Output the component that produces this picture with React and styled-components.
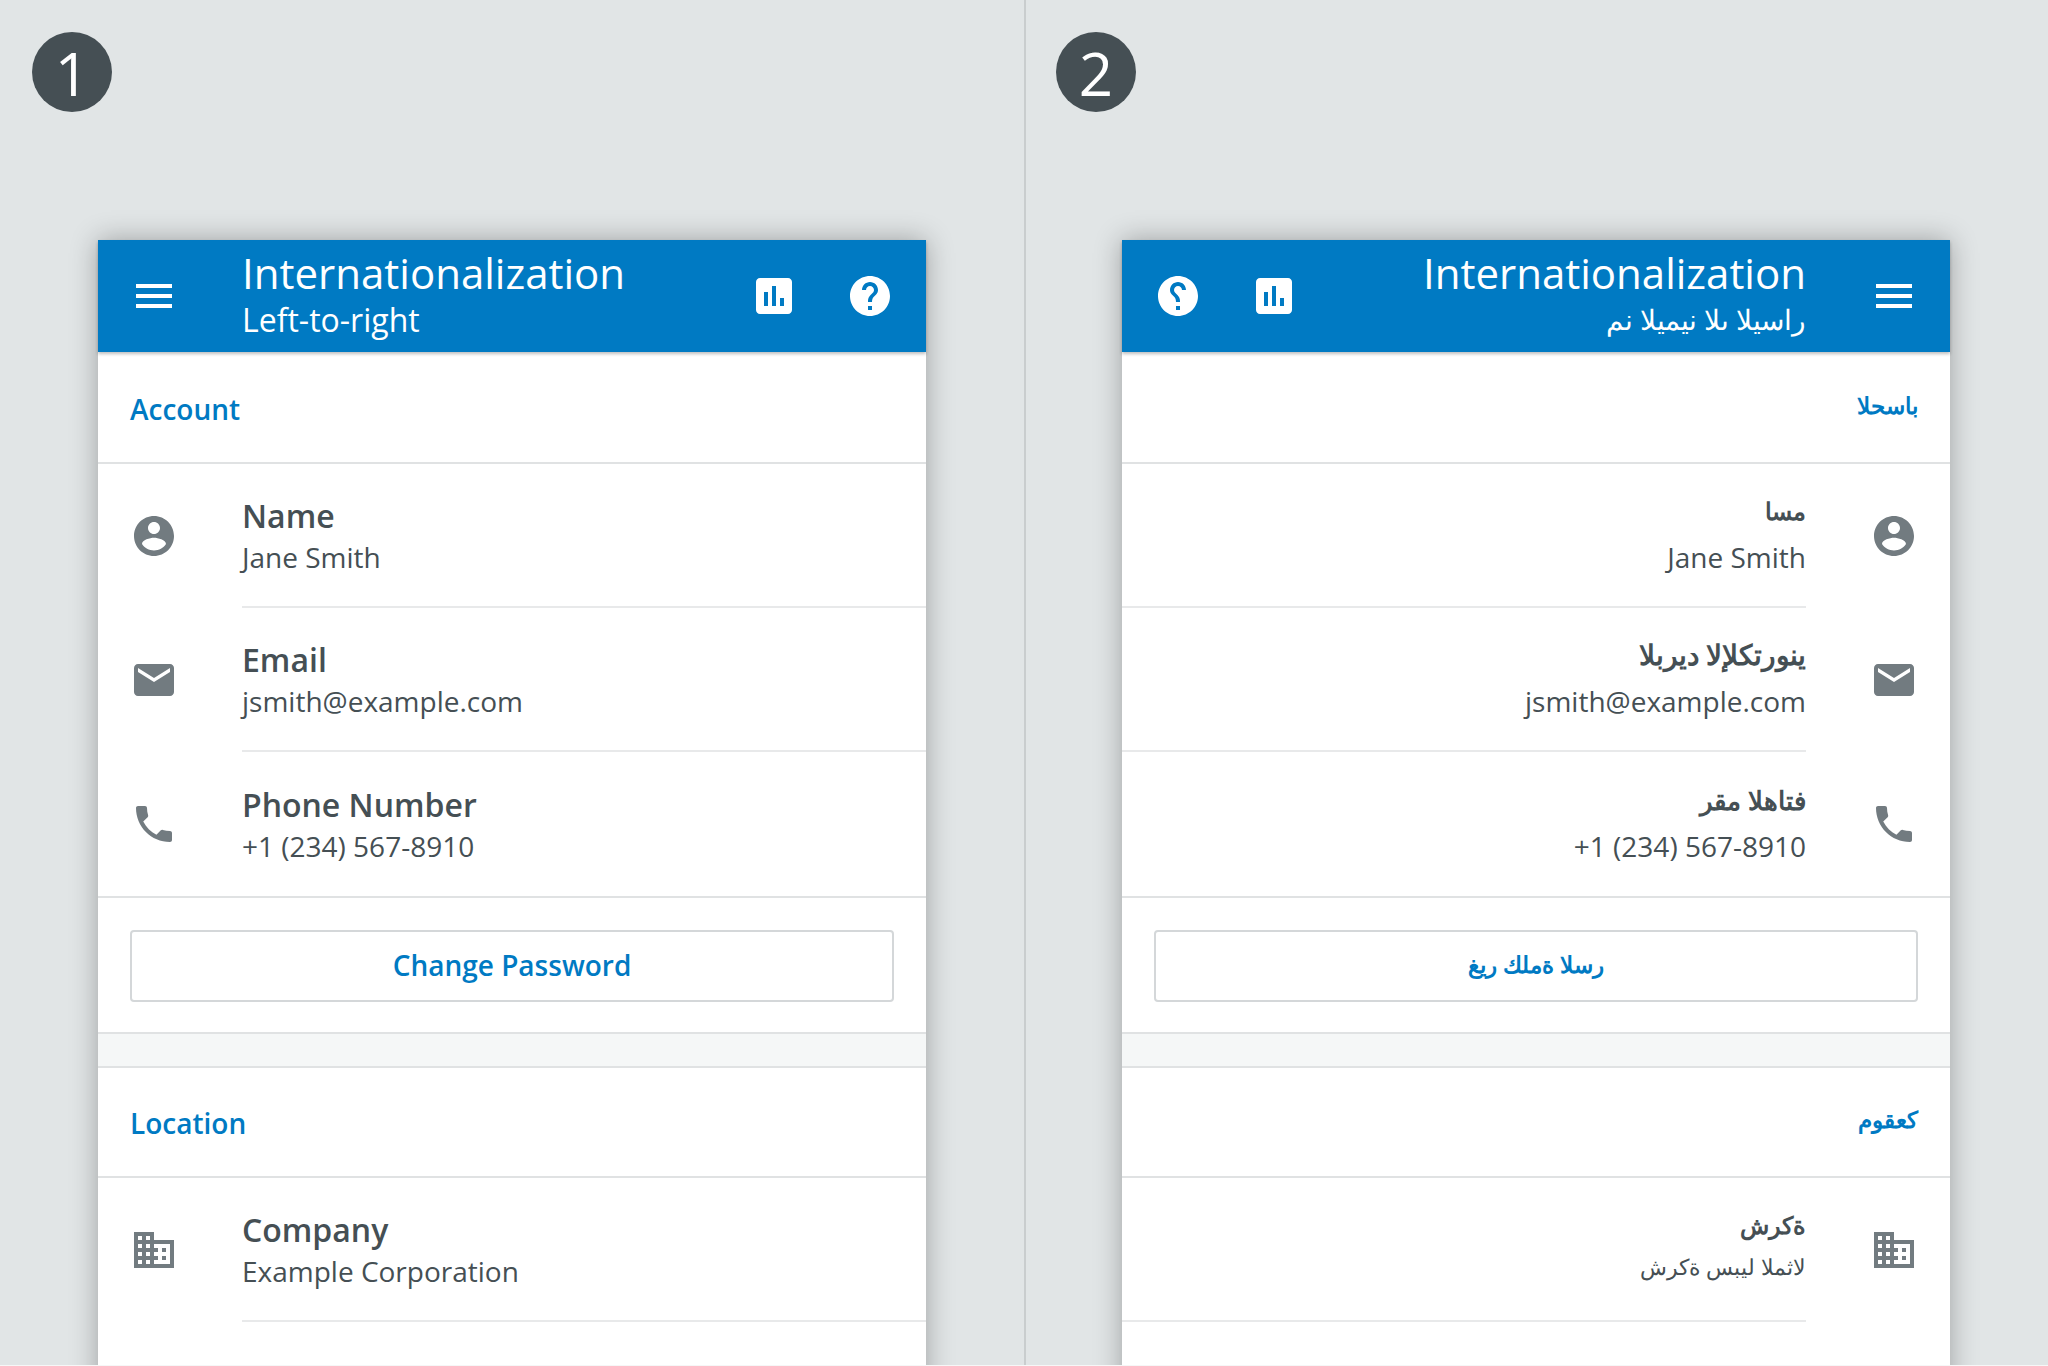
import React from 'react';
import styled, { createGlobalStyle } from 'styled-components';

const Global = createGlobalStyle`
  html, body { margin: 0; padding: 0; height: 100%; overflow: hidden; background: #f6f7f7; }
  * { box-sizing: border-box; }
`;

const Page = styled.div`
  display: grid;
  grid-template-columns: 1024px 1024px;
  width: 2048px;
  height: 1365px;
  overflow: hidden;
  font-family: "Open Sans", sans-serif;
  color: #454f54;
`;
const Pane = styled.section`
  height: 1365px;
  overflow: hidden;
  padding: 32px 98px 0 ${p => (p.$divided ? 96 : 98)}px;
  border-left: ${p => (p.$divided ? '2px solid #c9cdce' : '0')};
  background: #e1e5e6;
`;
const Badge = styled.div`
  width: 80px;
  height: 80px;
  margin-left: -66px;
  margin-bottom: 128px;
  border-radius: 50%;
  background: #454f54;
  color: #fff;
  font-size: 60px;
  font-weight: 500;
  line-height: 82px;
  text-align: center;
`;
const Phone = styled.div`
  width: 828px;
  height: 1200px;
  background: #fff;
  box-shadow: 0 0 26px rgba(0, 0, 0, 0.3);
`;
const AppBar = styled.header`
  display: flex;
  align-items: center;
  height: 112px;
  padding: 0 32px;
  background: #007ac3;
  color: #fff;
  box-shadow: 0 2px 3px rgba(0, 0, 0, 0.25);
  position: relative;
`;
const BarIcon = styled.svg`
  width: 48px;
  height: 48px;
  flex: none;
  fill: #fff;
  margin-inline-start: ${p => p.$gap || 0}px;
  transform: ${p => (p.$flip ? 'scaleX(-1)' : 'none')};
`;
const BarText = styled.div`
  flex: 1;
  min-width: 0;
  margin-inline-start: 64px;
`;
const AppTitle = styled.div`
  font-size: 42px;
  line-height: 50px;
  margin-top: -3px;
`;
const AppSub = styled.div`
  font-size: ${p => (p.$rtl ? 27.5 : 32)}px;
  line-height: 43px;
  font-weight: ${p => (p.$rtl ? 300 : 400)};
`;
const SectionHead = styled.div`
  display: flex;
  align-items: center;
  height: 110px;
  margin-top: ${p => (p.$first ? 2 : 0)}px;
  padding: ${p => (p.$rtl ? '0 32px 6px' : '2px 32px 0')};
  border-bottom: 2px solid #e0e2e3;
  color: #007ac3;
  font-size: ${p => (p.$rtl ? 22.5 : 28)}px;
  font-weight: 600;
`;
const Row = styled.div`
  display: flex;
  height: 144px;
`;
const RowIcon = styled.svg`
  width: 48px;
  height: 48px;
  flex: none;
  align-self: center;
  fill: #727b80;
  margin-inline: 32px 64px;
`;
const RowBody = styled.div`
  flex: 1;
  min-width: 0;
  display: flex;
  flex-direction: column;
  justify-content: center;
  padding-top: 2px;
  border-bottom: ${p => (p.$last ? '0' : '2px solid #e8e9ea')};
`;
const RowTitle = styled.div`
  font-size: ${p => p.$size || 32}px;
  line-height: ${p => (p.$ar ? 32 : 42)}px;
  padding-bottom: ${p => (p.$ar ? 10 : 0)}px;
  font-weight: 600;
`;
const RowValue = styled.div`
  font-size: ${p => p.$size || 28}px;
  line-height: ${p => (p.$ar ? 30 : 40)}px;
  padding-bottom: ${p => (p.$ar ? 10 : 0)}px;
  unicode-bidi: plaintext;
  text-align: ${p => (p.$rtl ? 'right' : 'left')};
`;
const Mirrored = styled.span`
  unicode-bidi: bidi-override;
  direction: rtl;
  font-size: 32px;
`;
const ButtonBlock = styled.div`
  padding: 32px 32px 30px;
  border-top: 2px solid #e0e2e3;
  border-bottom: 2px solid #e0e2e3;
`;
const OutlineButton = styled.button`
  display: block;
  width: 100%;
  height: 72px;
  padding: 0 0 ${p => (p.$rtl ? 4 : 2)}px;
  background: #fff;
  border: 2px solid #d4d7d9;
  border-radius: 4px;
  color: #007ac3;
  font: 600 ${p => (p.$rtl ? 22.8 : 28)}px "Open Sans", sans-serif;
`;
const Band = styled.div`
  height: 34px;
  background: #f5f7f7;
  border-bottom: 2px solid #e0e2e3;
`;

const P = {
  menu: 'M3 18h18v-2H3v2zm0-5h18v-2H3v2zm0-7v2h18V6H3z',
  chart: 'M19 3H5c-1.1 0-2 .9-2 2v14c0 1.1.9 2 2 2h14c1.1 0 2-.9 2-2V5c0-1.1-.9-2-2-2zM9 17H7v-7h2v7zm4 0h-2V7h2v10zm4 0h-2v-4h2v4z',
  help: 'M12 2C6.48 2 2 6.48 2 12s4.48 10 10 10 10-4.48 10-10S17.52 2 12 2zm1 17h-2v-2h2v2zm2.07-7.75l-.9.92C13.45 12.9 13 13.5 13 15h-2v-.5c0-1.1.45-2.1 1.17-2.83l1.24-1.26c.37-.36.59-.86.59-1.41 0-1.1-.9-2-2-2s-2 .9-2 2H8c0-2.21 1.79-4 4-4s4 1.79 4 4c0 .88-.36 1.68-.93 2.25z',
  person: 'M12 2C6.48 2 2 6.48 2 12s4.48 10 10 10 10-4.48 10-10S17.52 2 12 2zm0 3c1.66 0 3 1.34 3 3s-1.34 3-3 3-3-1.34-3-3 1.34-3 3-3zm0 14.2c-2.5 0-4.71-1.28-6-3.22.03-1.99 4-3.08 6-3.08 1.99 0 5.97 1.09 6 3.08-1.29 1.94-3.5 3.22-6 3.22z',
  mail: 'M20 4H4c-1.1 0-1.99.9-1.99 2L2 18c0 1.1.9 2 2 2h16c1.1 0 2-.9 2-2V6c0-1.1-.9-2-2-2zm0 4l-8 5-8-5V6l8 5 8-5v2z',
  phone: 'M6.62 10.79c1.44 2.83 3.76 5.14 6.59 6.59l2.2-2.2c.27-.27.67-.36 1.02-.24 1.12.37 2.33.57 3.57.57.55 0 1 .45 1 1V20c0 .55-.45 1-1 1-9.39 0-17-7.61-17-17 0-.55.45-1 1-1h3.5c.55 0 1 .45 1 1 0 1.25.2 2.45.57 3.57.11.35.03.74-.25 1.02l-2.2 2.2z',
  business: 'M12 7V3H2v18h20V7H12zM6 19H4v-2h2v2zm0-4H4v-2h2v2zm0-4H4V9h2v2zm0-4H4V5h2v2zm4 12H8v-2h2v2zm0-4H8v-2h2v2zm0-4H8V9h2v2zm0-4H8V5h2v2zm10 12h-8v-2h2v-2h-2v-2h2v-2h-2V9h8v10zm-2-8h-2v2h2v-2zm0 4h-2v2h2v-2z',
};

const ltr = {
  num: '1', dir: 'ltr', sub: 'Left-to-right', account: 'Account', change: 'Change Password', location: 'Location',
  name: 'Name', email: 'Email', phone: 'Phone Number', company: 'Company', companyValue: 'Example Corporation',
  next: 'Email',
};
const rtl = {
  num: '2', dir: 'rtl', sub: 'راسيلا ىلا نيميلا نم', account: 'باسحلا', change: 'رسلا ةملك ريغ', location: 'كعقوم',
  name: 'مسا', email: 'ينورتكلإلا ديربلا', phone: 'فتاهلا مقر', company: 'ةكرش', companyValue: 'لاثملا ليبس ةكرش',
  next: <Mirrored>Email</Mirrored>,
  sizes: { name: 24, email: 27.5, phone: 25.5, company: 23.5 },
};

const Icon = ({ as: C, d, ...rest }) => (
  <C viewBox="0 0 24 24" {...rest}><path d={d} /></C>
);

const Item = ({ icon, title, titleSize, value, valueAr, rtl: isRtl, last }) => (
  <Row>
    <Icon as={RowIcon} d={icon} />
    <RowBody $last={last}>
      <RowTitle $ar={!!titleSize} $size={titleSize}>{title}</RowTitle>
      <RowValue $rtl={isRtl} $ar={valueAr} $size={valueAr ? 22 : undefined}>{value}</RowValue>
    </RowBody>
  </Row>
);

const Panel = ({ t, divided }) => {
  const isRtl = t.dir === 'rtl';
  const s = t.sizes || {};
  return (
    <Pane $divided={divided} dir="ltr">
      <Badge>{t.num}</Badge>
      <Phone dir={t.dir}>
        <AppBar>
          <Icon as={BarIcon} d={P.menu} />
          <BarText>
            <AppTitle>Internationalization</AppTitle>
            <AppSub $rtl={isRtl}>{t.sub}</AppSub>
          </BarText>
          <Icon as={BarIcon} d={P.chart} />
          <Icon as={BarIcon} d={P.help} $gap={48} $flip={isRtl} />
        </AppBar>
        <SectionHead $first $rtl={isRtl}>{t.account}</SectionHead>
        <Item icon={P.person} title={t.name} titleSize={s.name} value="Jane Smith" rtl={isRtl} />
        <Item icon={P.mail} title={t.email} titleSize={s.email} value="jsmith@example.com" rtl={isRtl} />
        <Item icon={P.phone} title={t.phone} titleSize={s.phone} value="+1 (234) 567-8910" rtl={isRtl} last />
        <ButtonBlock><OutlineButton $rtl={isRtl}>{t.change}</OutlineButton></ButtonBlock>
        <Band />
        <SectionHead $rtl={isRtl}>{t.location}</SectionHead>
        <Item icon={P.business} title={t.company} titleSize={s.company} value={t.companyValue} valueAr={isRtl} rtl={isRtl} />
        <Item icon={P.mail} title={t.next} value="" rtl={isRtl} />
      </Phone>
    </Pane>
  );
};

export default function App() {
  return (
    <Page>
      <Global />
      <Panel t={ltr} />
      <Panel t={rtl} divided />
    </Page>
  );
}
